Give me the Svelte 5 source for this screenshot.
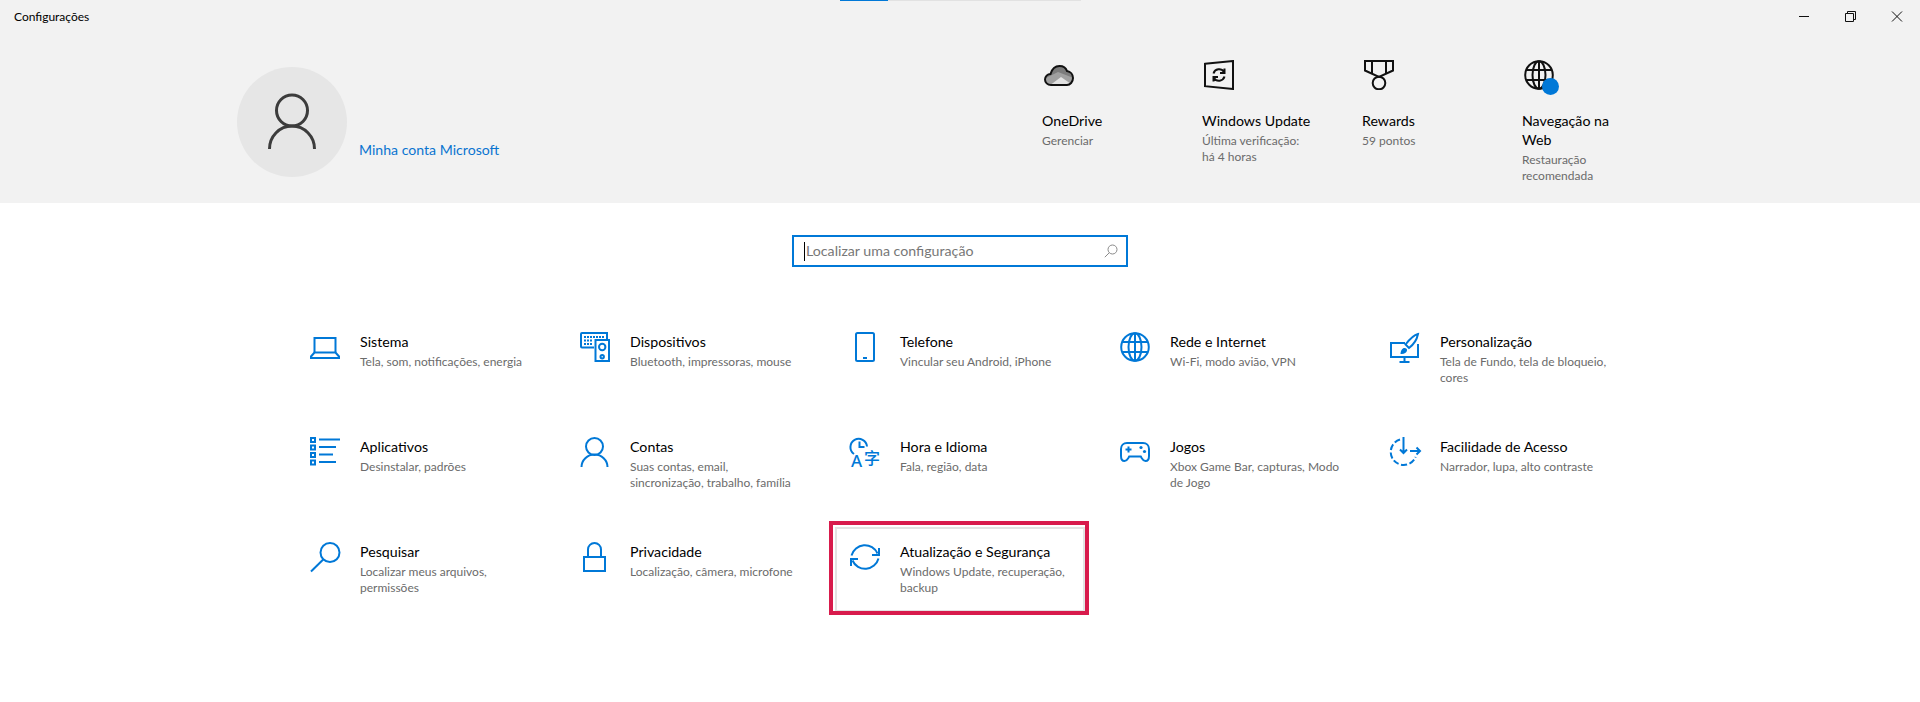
<script lang="ts">
  const quickLinks = [
    { icon: "cloud", title: "OneDrive", sub: "Gerenciar" },
    { icon: "update", title: "Windows Update", sub: "Última verificação: há 4 horas" },
    { icon: "medal", title: "Rewards", sub: "59 pontos" },
    { icon: "web", title: "Navegação na Web", sub: "Restauração recomendada" },
  ];

  const settings = [
    { icon: "laptop", title: "Sistema", sub: "Tela, som, notificações, energia" },
    { icon: "devices", title: "Dispositivos", sub: "Bluetooth, impressoras, mouse" },
    { icon: "phone", title: "Telefone", sub: "Vincular seu Android, iPhone" },
    { icon: "globe", title: "Rede e Internet", sub: "Wi-Fi, modo avião, VPN" },
    { icon: "brush", title: "Personalização", sub: "Tela de Fundo, tela de bloqueio, cores" },
    { icon: "apps", title: "Aplicativos", sub: "Desinstalar, padrões" },
    { icon: "user", title: "Contas", sub: "Suas contas, email, sincronização, trabalho, família" },
    { icon: "time", title: "Hora e Idioma", sub: "Fala, região, data" },
    { icon: "game", title: "Jogos", sub: "Xbox Game Bar, capturas, Modo de Jogo" },
    { icon: "ease", title: "Facilidade de Acesso", sub: "Narrador, lupa, alto contraste" },
    { icon: "search", title: "Pesquisar", sub: "Localizar meus arquivos, permissões" },
    { icon: "lock", title: "Privacidade", sub: "Localização, câmera, microfone" },
    { icon: "sync", title: "Atualização e Segurança", sub: "Windows Update, recuperação, backup", active: true },
  ];
</script>

{#snippet globeLines()}
  <circle cx="15" cy="15" r="13.8" />
  <ellipse cx="15" cy="15" rx="6.5" ry="13.8" />
  <path d="M15 1v28M2.5 10h25M2.5 20h25" />
{/snippet}

{#snippet icon(name: string)}
  <svg class="icon" viewBox="0 0 30 30" aria-hidden="true">
    {#if name === "laptop"}
      <path d="M4.500 20.500V6h21v14.500" />
      <path d="M4.500 20.500 1 24.500v1.500h28v-1.500l-3.500-4z" />
    {:else if name === "devices"}
      <path d="M14 15.500H2a1 1 0 0 1-1-1V2a1 1 0 0 1 1-1h25v6" />
      <rect x="15.500" y="8" width="13.500" height="21" />
      <circle cx="22.200" cy="15" r="3.200" />
      <circle cx="22.200" cy="24.800" r="1.700" />
      <path class="dots" d="M4 5h20M4 8.500h8M4 12h8" />
    {:else if name === "phone"}
      <rect x="6" y="1" width="18" height="28" rx="1.500" />
      <path d="M13 26h4" />
    {:else if name === "globe"}
      {@render globeLines()}
    {:else if name === "brush"}
      <path d="M15 11H1v14h27V12" />
      <path d="M14.500 25v4.500M9.500 30h10" />
      <path d="M28 2c-4 1-9 6-12.500 10.500l3.500 3.500C23 13 27 7 28 2z" />
      <path class="fill" d="M10.500 22c.3-3.500 1.700-6 4-6 1.700 0 2.800 1.200 2.500 2.600-.4 2.600-3.300 3.800-6.500 3.400z" />
    {:else if name === "apps"}
      <path class="fill" fill-rule="evenodd" d="M0 0h6v6H0zM2 2v2h2V2zM0 7.500h6v6H0zM2 9.500v2h2v-2zM0 15h6v6H0zM2 17v2h2v-2zM0 22.500h6v6H0zM2 24.500v2h2v-2z" />
      <path d="M9 2.500h21M9 10h17M9 17.500h14M9 25h17" />
    {:else if name === "user"}
      <circle cx="14.500" cy="9.500" r="8.500" />
      <path d="M1.500 30a13 12.500 0 0 1 26 0" />
    {:else if name === "time"}
      <path d="M4 17a8.300 8.300 0 1 1 13-7.500" />
      <path d="M9.500 4.500v5.500h5" />
      <text class="glyph" x="1" y="30" font-size="17">A</text>
      <text class="glyph cjk" x="14" y="27" font-size="16">字</text>
    {:else if name === "game"}
      <path d="M7 6h16c3.500 0 6 2.500 6 6v7c0 3-1.500 5-3.500 5-1.800 0-2.700-1-3.700-2.700l-1-1.800H9.200l-1 1.800C7.200 23 6.300 24 4.500 24 2.500 24 1 22 1 19v-7c0-3.500 2.500-6 6-6z" />
      <path d="M5.500 12.500h6M8.500 9.500v6" />
      <circle class="fill" cx="21" cy="10.500" r="1.600" />
      <circle class="fill" cx="24.500" cy="14.500" r="1.600" />
    {:else if name === "ease"}
      <path d="M10 2.500a13 13 0 1 0 15.700 17.500" stroke-dasharray="6 2.500" />
      <path d="M13.500 0v15.500M10 12.500l3.500 3.500 3.500-3.500" />
      <path d="M20 14h10M26.500 10.500 30 14l-3.500 3.500" />
    {:else if name === "search"}
      <circle cx="20" cy="10.500" r="9.500" />
      <path d="M13.200 17.500 1 29.500" />
    {:else if name === "lock"}
      <rect x="4" y="15" width="21" height="14" />
      <path d="M8 15V7.500a6.500 6.500 0 0 1 13 0V15" />
    {:else if name === "sync"}
      <path d="M1.500 13.500A13.800 13.800 0 0 1 27.500 11.500" />
      <path d="M29 6v7h-7" />
      <path d="M28.500 16.500A13.800 13.800 0 0 1 2.500 18.500" />
      <path d="M1 24v-7h7" />
    {/if}
  </svg>
{/snippet}

{#snippet quickIcon(name: string)}
  <svg class="quick-icon" viewBox="0 0 30 30" aria-hidden="true">
    {#if name === "cloud"}
      <defs>
        <clipPath id="cloud-clip">
          <path d="M7 25C3.500 25 1 22.500 1 19.500S3.500 14 6.500 14C8 9 11.500 6 15.500 6c3.500 0 6.500 2 7.500 5 3.500.5 6 3.500 6 7 0 4-3 7-6 7z" />
        </clipPath>
      </defs>
      <g clip-path="url(#cloud-clip)" stroke="none">
        <rect width="30" height="30" fill="#7c7c7c" />
        <path d="M0 19 14 12l16 6v8H0z" fill="#a0a0a0" />
        <path d="M5 26 17 17l13 9z" fill="#e2e2e2" />
      </g>
      <path d="M7 25C3.500 25 1 22.500 1 19.500S3.500 14 6.500 14C8 9 11.500 6 15.500 6c3.500 0 6.500 2 7.500 5 3.500.5 6 3.500 6 7 0 4-3 7-6 7z" />
    {:else if name === "update"}
      <path d="M1 3.800 29 1v28L1 26.200z" />
      <path d="M9.500 13.500a5.800 5.800 0 0 1 10.500-1.500M20.500 8.500V13H16" />
      <path d="M20.500 16.500a5.800 5.800 0 0 1-10.500 1.500M9.500 21.500V17H14" />
    {:else if name === "medal"}
      <path d="M1 1h28v9.500L15 17 1 10.500z" />
      <path d="M8 1v12M22 1v12" />
      <circle cx="15" cy="23" r="6.300" />
    {:else if name === "web"}
      {@render globeLines()}
    {/if}
  </svg>
{/snippet}

<main class="page">
  <header class="header">
    <div class="progress"><span></span></div>

    <div class="titlebar">
      <span class="app-name">Configurações</span>
      <div class="controls">
        <svg viewBox="0 0 46 32"><path d="M17 16.500h10" /></svg>
        <svg viewBox="0 0 46 32"><path d="M19.500 13.500v-2h8v8h-2M17.500 13.500h8v8h-8z" /></svg>
        <svg viewBox="0 0 46 32"><path d="M18 11.500l10 10M28 11.500l-10 10" /></svg>
      </div>
    </div>

    <div class="profile">
      <div class="account">
        <div class="avatar">
          <svg viewBox="0 0 50 58" aria-hidden="true">
            <circle cx="25" cy="17.500" r="15.500" />
            <path d="M2.500 56a22.500 23 0 0 1 45 0" />
          </svg>
        </div>
        <span class="account-link">Minha conta Microsoft</span>
      </div>

      <div class="quick-links">
        {#each quickLinks as link}
          <div class="quick-link">
            <div class="quick-icon-wrap" class:badge={link.icon === "web"}>
              {@render quickIcon(link.icon)}
            </div>
            <div class="quick-title">{link.title}</div>
            <div class="quick-sub">{link.sub}</div>
          </div>
        {/each}
      </div>
    </div>
  </header>

  <div class="search">
    <span class="caret"></span>
    <span class="placeholder">Localizar uma configuração</span>
    <svg class="search-icon" viewBox="0 0 14 14" aria-hidden="true">
      <circle cx="8.500" cy="5.500" r="4.500" />
      <path d="M5.300 8.700 .8 13.200" />
    </svg>
  </div>

  <section class="grid">
    {#each settings as item}
      <div class="item" class:active={item.active}>
        {@render icon(item.icon)}
        <div class="item-text">
          <div class="item-title">{item.title}</div>
          <div class="item-sub">{item.sub}</div>
        </div>
      </div>
    {/each}
  </section>
</main>

<style>
  :global(body) {
    background: #fff;
  }

  .page {
    height: 702px;
    overflow: hidden;
    font-family: Lato, "Noto Sans", sans-serif;
    color: #000;
  }

  .header {
    position: relative;
    height: 203px;
    background: #f2f2f2;
  }

  .progress {
    position: absolute;
    top: 0;
    left: 840px;
    width: 241px;
    height: 1px;
    background: #e2e2e2;
  }

  .progress span {
    display: block;
    width: 48px;
    height: 1px;
    background: #0078d7;
  }

  .titlebar {
    display: flex;
    justify-content: space-between;
    height: 32px;
    padding-left: 14px;
  }

  .app-name {
    font-size: 12px;
    line-height: 34px;
  }

  .controls {
    display: flex;
  }

  .controls svg {
    width: 46px;
    height: 32px;
    fill: none;
    stroke: #111;
    stroke-width: 1;
  }

  .profile {
    display: flex;
    align-items: flex-start;
    justify-content: space-between;
    padding: 28px 238px 0 237px;
  }

  .account {
    display: flex;
    align-items: flex-end;
    gap: 12px;
    margin-top: 7px;
  }

  .avatar {
    display: flex;
    align-items: center;
    justify-content: center;
    width: 110px;
    height: 110px;
    border-radius: 50%;
    background: #e6e6e6;
  }

  .avatar svg {
    width: 50px;
    height: 58px;
    fill: none;
    stroke: #3c3c3c;
    stroke-width: 3;
  }

  .account-link {
    margin-bottom: 17px;
    font-size: 14.1px;
    line-height: 20px;
    color: #0a74d0;
  }

  .quick-links {
    display: flex;
  }

  .quick-link {
    width: 160px;
    padding-right: 48px;
    box-sizing: border-box;
  }

  .quick-icon-wrap {
    position: relative;
    width: 30px;
    height: 30px;
    margin: 0 0 21px 2px;
  }

  .quick-icon-wrap.badge::after {
    content: "";
    position: absolute;
    left: 18px;
    top: 18px;
    width: 17px;
    height: 17px;
    border-radius: 50%;
    background: #0078d7;
  }

  .quick-icon {
    display: block;
    width: 30px;
    height: 30px;
    fill: none;
    stroke: #111;
    stroke-width: 2;
  }

  .quick-title {
    font-size: 14.2px;
    line-height: 19px;
  }

  .quick-sub {
    margin-top: 3px;
    font-size: 12px;
    line-height: 16px;
    color: #6b6b6b;
  }

  .search {
    display: flex;
    align-items: center;
    box-sizing: border-box;
    width: 336px;
    height: 32px;
    margin: 32px auto 0;
    padding: 0 8px 0 10px;
    border: 2px solid #0078d7;
    font-size: 14.2px;
    color: #777;
  }

  .caret {
    width: 1px;
    height: 19px;
    margin-right: 1px;
    background: #000;
  }

  .placeholder {
    flex: 1;
    padding-bottom: 2px;
  }

  .search-icon {
    width: 14px;
    height: 14px;
    fill: none;
    stroke: #8a8a8a;
    stroke-width: 1;
  }

  .grid {
    display: grid;
    grid-template-columns: repeat(5, 250px);
    grid-auto-rows: 85px;
    gap: 20px;
    justify-content: center;
    margin-top: 50px;
  }

  .item {
    position: relative;
    display: flex;
    gap: 20px;
    box-sizing: border-box;
    padding: 13px 13px;
    border: 2px solid transparent;
  }

  .item.active {
    border-color: #e3e3e3;
  }

  .item.active::after {
    content: "";
    position: absolute;
    top: -8px;
    right: -6px;
    bottom: -5px;
    left: -8px;
    border: 4px solid #d81b4c;
  }

  .icon {
    flex: none;
    width: 30px;
    height: 30px;
    overflow: visible;
    fill: none;
    stroke: #0078d7;
    stroke-width: 2;
  }

  .icon .fill {
    fill: #0078d7;
    stroke: none;
  }

  .icon .dots {
    stroke-dasharray: 2 1;
  }

  .icon .glyph {
    fill: #0078d7;
    stroke: none;
    font-family: "Noto Sans", sans-serif;
    font-weight: 500;
  }

  .icon .cjk {
    font-family: "Noto Sans CJK SC", sans-serif;
  }

  .item-title {
    font-size: 14.2px;
    line-height: 20px;
  }

  .item-sub {
    margin-top: 2px;
    font-size: 12px;
    line-height: 16px;
    color: #6b6b6b;
  }
</style>
